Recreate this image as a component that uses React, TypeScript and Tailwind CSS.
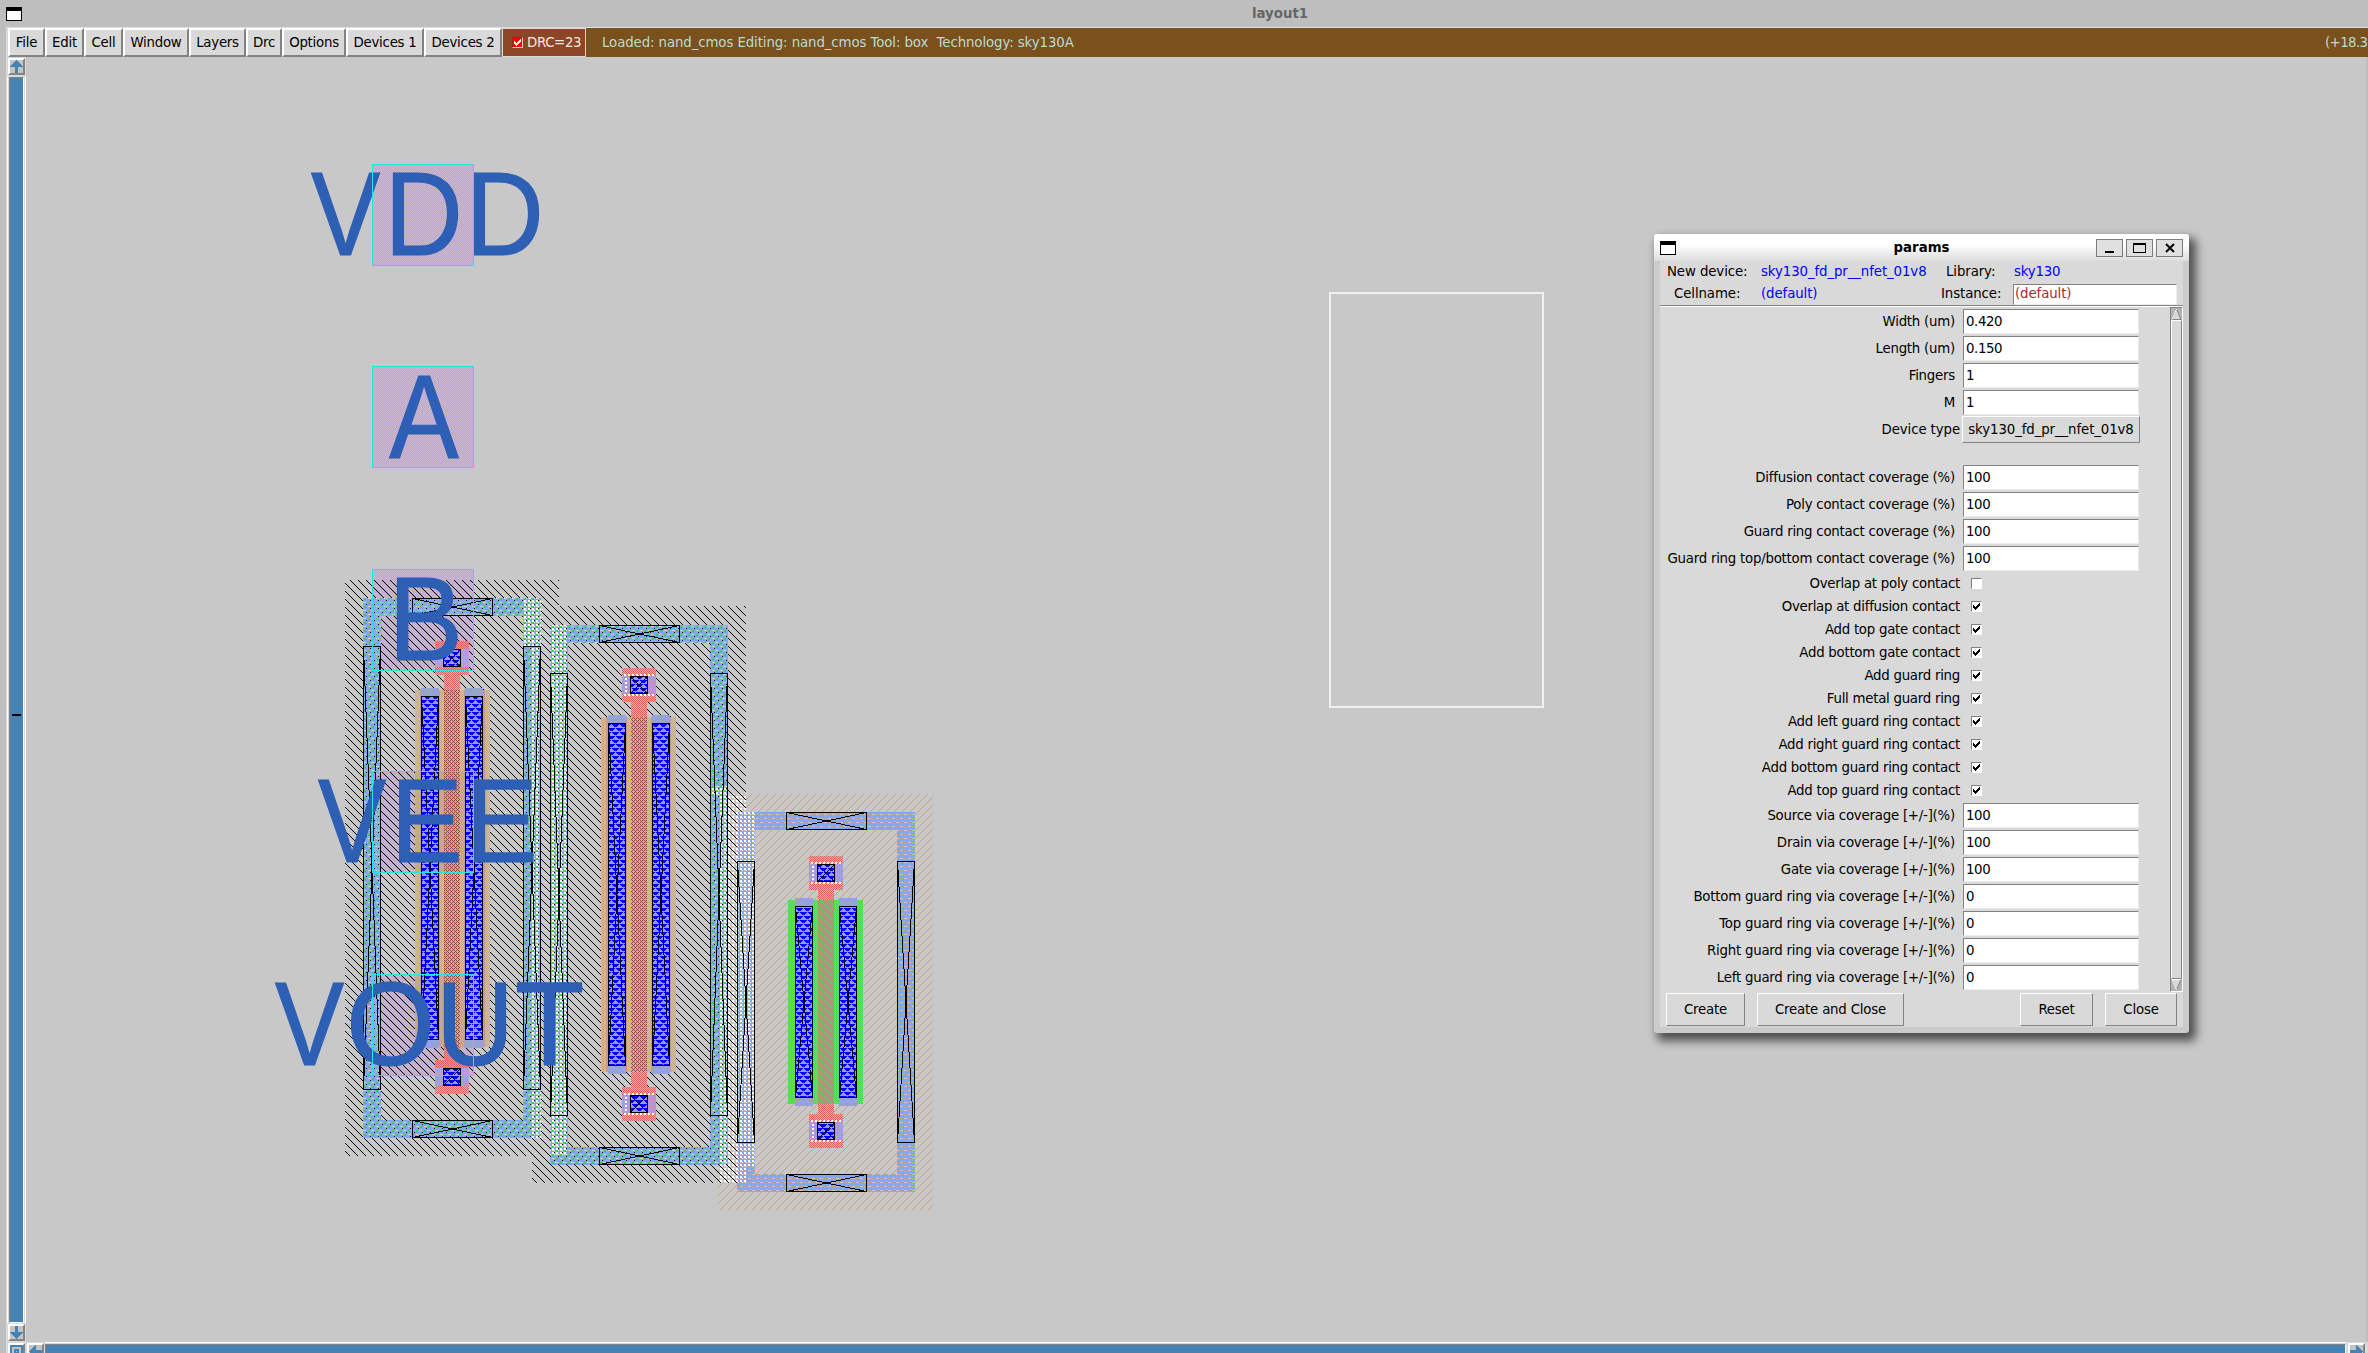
import React from "react";

const FONT = "font-['DejaVu_Sans',sans-serif] text-[13.33px] tracking-[-0.1px]";

/* ---------- Menu bar ---------- */

const MENUS: [string, string][] = [
  ["File", "w-[37px]"],
  ["Edit", "w-[39px]"],
  ["Cell", "w-[39px]"],
  ["Window", "w-[66px]"],
  ["Layers", "w-[57px]"],
  ["Drc", "w-[36px]"],
  ["Options", "w-[64px]"],
  ["Devices 1", "w-[78px]"],
  ["Devices 2", "w-[78px]"],
];

function WindowIcon() {
  return <div className="h-[14px] w-4 border border-t-4 border-black bg-white" />;
}

function Check({ color = "#000" }: { color?: string }) {
  return (
    <svg width="9" height="9" viewBox="0 0 9 9" shapeRendering="crispEdges">
      <path d="M1 3h1v1h1v1h1v-1h1v-1h1v-1h1v-1h1v3h-1v1h-1v1h-1v1h-1v1h-1v-1h-1v-1h-1z" fill={color} />
    </svg>
  );
}

function MenuBar() {
  return (
    <div className="ml-[6px] flex h-[30px] shrink-0 border-t border-[#dedede] bg-[#7a501c]">
      <div className="w-[2px] bg-[#d9d9d9]" />
      {MENUS.map(([name, w]) => (
        <div
          key={name}
          className={`${w} flex shrink-0 items-center justify-center border-2 border-t-white border-l-white border-r-[#828282] border-b-[#828282] bg-[#d9d9d9] tracking-[-0.25px] whitespace-nowrap text-black`}
        >
          {name}
        </div>
      ))}
      <div className="flex w-[84px] shrink-0 items-center border border-[#d9d9d9] bg-[#8c4526] pl-[9px] tracking-[-0.35px] whitespace-nowrap text-[#f8e8e0]">
        <span className="mr-[4px] flex h-[11px] w-[11px] items-center justify-center border border-t-[#803020] border-l-[#803020] border-r-[#e8c8c0] border-b-[#e8c8c0] bg-[#ff0000]">
          <Check color="#fff" />
        </span>
        <span>DRC=23</span>
      </div>
      <div className="ml-[16px] flex-1 self-center whitespace-pre text-[#b9dcd2]">
        Loaded: nand_cmos Editing: nand_cmos Tool: box{"  "}Technology: sky130A
      </div>
      <div className="w-[43px] self-center tracking-[-0.6px] whitespace-nowrap text-[#b9dcd2]">(+18.3</div>
    </div>
  );
}

/* ---------- Canvas scrollbars ---------- */

function ArrowButton({ rotate }: { rotate: string }) {
  return (
    <div className="h-[17px] w-[17px] shrink-0 border-2 border-t-white border-l-white border-r-[#858585] border-b-[#858585] bg-[#c3c3c3]">
      <svg width="13" height="13" viewBox="0 0 13 13" className={rotate} shapeRendering="crispEdges">
        <path d="M6.5 0L13 7H8v6H5V7H0z" fill="#4682b4" />
      </svg>
    </div>
  );
}

function LeftScrollbar() {
  return (
    <div className="flex h-full w-[20px] shrink-0 flex-col bg-[#d9d9d9] pt-px pl-[2px]">
      <ArrowButton rotate="" />
      <div className="-ml-px mt-[2px] flex h-[1246px] shrink-0 border-x border-white bg-[#d9d9d9] pr-px pl-px">
        <div className="relative h-full w-[15px] border border-b-white border-t-[#828282] border-l-[#828282] border-r-white bg-[#4682b4]">
          <div className="absolute top-[636px] left-[2px] h-[2px] w-[9px] bg-black" />
        </div>
      </div>
      <div className="mt-px shrink-0">
        <ArrowButton rotate="rotate-180" />
      </div>
      <div className="mt-[2px] h-[17px] w-[17px] shrink-0 border-2 border-t-white border-l-white border-r-[#858585] border-b-[#858585] bg-[#c3c3c3]">
        <svg width="13" height="13" viewBox="0 0 13 13" shapeRendering="crispEdges">
          <path d="M1 1h11v11H1zM5 5h3v3H5z" fill="none" stroke="#4682b4" strokeWidth="2" />
        </svg>
      </div>
    </div>
  );
}

function BottomScrollbar() {
  return (
    <div className="flex h-[11px] w-full shrink-0 overflow-hidden bg-[#d9d9d9]">
      <div className="mt-px ml-px">
        <ArrowButton rotate="-rotate-90" />
      </div>
      <div className="ml-px flex-1 border-t border-white pt-px">
        <div className="h-5 border border-t-[#828282] border-l-[#828282] border-r-white bg-[#4682b4]" />
      </div>
      <div className="mt-px mr-[3px] ml-[2px]">
        <ArrowButton rotate="rotate-90" />
      </div>
    </div>
  );
}

/* ---------- Layout drawing ---------- */

type Box = [number, number, number, number];

function Rect({ b, fill }: { b: Box; fill: string }) {
  return <rect x={b[0]} y={b[1]} width={b[2] - b[0]} height={b[3] - b[1]} fill={fill} />;
}

function Contact({ b }: { b: Box }) {
  const [x0, y0, x1, y1] = b;
  return (
    <path
      d={`M${x0 + 0.5} ${y0 + 0.5}H${x1 - 0.5}V${y1 - 0.5}H${x0 + 0.5}ZL${x1 - 0.5} ${y1 - 0.5}M${x1 - 0.5} ${y0 + 0.5}L${x0 + 0.5} ${y1 - 0.5}`}
      fill="none"
      stroke="#000"
      strokeWidth="1"
    />
  );
}

function Ring({ b, fill }: { b: Box; fill: string }) {
  const [x0, y0, x1, y1] = b;
  return (
    <path
      d={`M${x0} ${y0}H${x1}V${y1}H${x0}ZM${x0 + 18} ${y0 + 18}V${y1 - 18}H${x1 - 18}V${y0 + 18}Z`}
      fill={fill}
      fillRule="evenodd"
    />
  );
}

interface DeviceSpec {
  ring: Box;
  ringFill: string;
  sideY: [number, number];
  diff: Box;
  diffFill: string;
  innerFill: string;
  stripY: [number, number];
  padY: [number, number];
  polyFill: string;
  flagged: boolean;
}

const DEVICES: DeviceSpec[] = [
  {
    ring: [363, 598, 541, 1138],
    ringFill: "url(#ringn)",
    sideY: [646, 1090],
    diff: [415, 690, 490, 1047],
    diffFill: "url(#diffn)",
    innerFill: "url(#diffn2)",
    stripY: [696, 1040],
    padY: [641, 1060],
    polyFill: "url(#polyn)",
    flagged: false,
  },
  {
    ring: [550, 625, 728, 1165],
    ringFill: "url(#ringn)",
    sideY: [673, 1116],
    diff: [601, 717, 676, 1072],
    diffFill: "url(#diffn)",
    innerFill: "url(#diffn2)",
    stripY: [723, 1066],
    padY: [668, 1087],
    polyFill: "url(#polyn)",
    flagged: true,
  },
  {
    ring: [737, 812, 915, 1192],
    ringFill: "url(#ringp)",
    sideY: [861, 1143],
    diff: [788, 900, 863, 1104],
    diffFill: "url(#diffp)",
    innerFill: "url(#diffp)",
    stripY: [906, 1098],
    padY: [856, 1114],
    polyFill: "url(#polyp)",
    flagged: true,
  },
];

/* regions painted by the design rule checker */
const DRC: Box[] = [
  [523, 598, 541, 646],
  [532, 646, 541, 1138],
  [550, 625, 568, 1156],
  [710, 786, 728, 796],
  [719, 796, 728, 1147],
  [728, 794, 746, 1156],
  [720, 1147, 746, 1183],
  [746, 812, 755, 1166],
];

function DeviceBase({ d }: { d: DeviceSpec }) {
  const [x0] = d.ring;
  const cx = x0 + 72;
  const px = x0 + 81;
  return (
    <g>
      <Ring b={d.ring} fill={d.ringFill} />
      <Rect b={d.diff} fill={d.diffFill} />
      <Rect b={[d.diff[0] + 5, d.diff[1], px - 4, d.diff[3]]} fill={d.innerFill} />
      <Rect b={[px + 20, d.diff[1], d.diff[2] - 5, d.diff[3]]} fill={d.innerFill} />
      <Rect b={[px, d.padY[0] + 34, px + 16, d.padY[1]]} fill="url(#poly)" />
      <Rect b={[px, d.diff[1], px + 16, d.diff[3]]} fill={d.polyFill} />
      {d.padY.map((y) => (
        <g key={y}>
          <Rect b={[cx, y, cx + 34, y + 34]} fill="url(#poly)" />
          <Rect b={[cx, y + 8, cx + 34, y + 26]} fill="url(#padmetal)" />
        </g>
      ))}
    </g>
  );
}

function DeviceTop({ d }: { d: DeviceSpec }) {
  const [x0, y0, x1, y1] = d.ring;
  const cx = x0 + 72;
  const strips: Box[] = [
    [x0 + 58, d.stripY[0], x0 + 76, d.stripY[1]],
    [x0 + 102, d.stripY[0], x0 + 120, d.stripY[1]],
  ];
  const contacts: Box[] = [
    [x0 + 49, y0, x0 + 130, y0 + 18],
    [x0 + 49, y1 - 18, x0 + 130, y1],
    [x0, d.sideY[0], x0 + 18, d.sideY[1]],
    [x1 - 18, d.sideY[0], x1, d.sideY[1]],
  ];
  return (
    <g>
      {strips.map((s) => (
        <g key={s[0]}>
          <Rect b={[s[0], s[1] - 8, s[2], s[3] + 8]} fill="url(#cap)" />
          <Rect b={s} fill="url(#licon)" />
        </g>
      ))}
      {d.padY.map((y) => (
        <g key={y}>
          <Rect b={[cx + 8, y + 8, cx + 26, y + 26]} fill="url(#licon)" />
          {d.flagged && (
            <path
              d={`M${cx + 2} ${y + 7}h32M${cx + 2} ${y + 27}h32M${cx + 4} ${y + 10}v16`}
              stroke="#fff"
              strokeWidth="2"
              strokeDasharray="2 2"
              fill="none"
            />
          )}
        </g>
      ))}
      {contacts.concat(strips).map((c, i) => (
        <Contact key={i} b={c} />
      ))}
      {d.padY.map((y) => (
        <Contact key={y} b={[cx + 8, y + 8, cx + 26, y + 26]} />
      ))}
    </g>
  );
}

/* left bearing, ink width (em) of each capital */
const GLYPH: Record<string, [number, number]> = {
  V: [0.0044, 0.656],
  D: [0.082, 0.59],
  A: [0.002, 0.662],
  B: [0.082, 0.535],
  E: [0.082, 0.538],
  O: [0.048, 0.682],
  U: [0.078, 0.565],
  T: [0.023, 0.565],
};

const LABELS: { top: number; base: number; letters: [string, number, number][] }[] = [
  { top: 164, base: 255, letters: [["V", 311, 69], ["D", 393, 65], ["D", 474, 65]] },
  { top: 366, base: 458, letters: [["A", 389, 70]] },
  { top: 569, base: 660, letters: [["B", 397, 61]] },
  { top: 771, base: 862, letters: [["V", 318, 68], ["E", 399, 59], ["E", 474, 59]] },
  { top: 974, base: 1065, letters: [["V", 275, 69], ["O", 351, 79], ["U", 444, 62], ["T", 517, 65]] },
];

const SIZE = 118.5;

function Patterns() {
  const P = (id: string, w: number, h: number, body: React.ReactNode) => (
    <pattern id={id} width={w} height={h} patternUnits="userSpaceOnUse">
      {body}
    </pattern>
  );
  return (
    <defs>
      {P("nwell", 8, 8, Array.from({ length: 8 }, (_, i) => <rect key={i} x={(i + 2) % 8} y={i} width="1" height="1" fill="#000" />))}
      {P("psub", 8, 8, Array.from({ length: 8 }, (_, i) => <rect key={i} x={(17 - i) % 8} y={i} width="1" height="1" fill="#c8a078" />))}
      {P(
        "ringn",
        8,
        8,
        <>
          <rect width="8" height="8" fill="#80a8ff" />
          <path d="M0 2h2v2H0zM4 6h2v2H4z" fill="#3ccc50" />
          <path d="M3 2h3v1H3zM0 6h3v1H0z" fill="#d0d0c8" />
          <path d="M2 0h1v1H2zM6 4h1v1H6z" fill="#000" />
        </>
      )}
      {P(
        "ringp",
        8,
        8,
        <>
          <rect width="8" height="8" fill="#80a8ff" />
          <path d="M0 2h3v1H0zM4 6h3v1H4z" fill="#c8a078" />
          <path d="M4 2h3v1H4zM0 6h3v1H0z" fill="#c8c8c8" />
        </>
      )}
      {P("drc", 4, 4, <path d="M0 0h2v2H0zM2 2h1v1H2z" fill="#fff" />)}
      {P("poly", 2, 2, <><rect width="2" height="2" fill="#d4b4b4" /><path d="M0 0h1v1H0zM1 1h1v1H1z" fill="#e06060" /></>)}
      {P("polyn", 4, 4, <><rect width="4" height="4" fill="#cca8a0" /><path d="M0 0h1v1H0zM1 1h1v1H1zM2 2h1v1H2zM3 3h1v1H3zM2 0h1v1H2zM0 2h1v1H0z" fill="#a04444" /></>)}
      {P("polyp", 8, 8, <><rect width="8" height="8" fill="#b89080" />{Array.from({ length: 8 }, (_, i) => <rect key={i} x={i} y={i} width="1" height="1" fill="#50d850" />)}</>)}
      {P("diffn", 2, 2, <><rect width="2" height="2" fill="#c8c0b8" /><path d="M0 0h1v1H0zM1 1h1v1H1z" fill="#cca880" /></>)}
      {P("diffn2", 2, 2, <><rect width="2" height="2" fill="#c8a098" /><path d="M0 0h1v1H0zM1 1h1v1H1z" fill="#c09098" /></>)}
      {P("diffp", 2, 2, <><rect width="2" height="2" fill="#98c090" /><path d="M0 0h1v1H0zM1 1h1v1H1z" fill="#48d848" /></>)}
      {P("cap", 2, 2, <><rect width="2" height="2" fill="#90a0f0" /><path d="M0 0h1v1H0z" fill="#a8a0d0" /></>)}
      {P("padmetal", 2, 2, <><rect width="2" height="2" fill="#90a0f0" /><path d="M0 0h1v1H0z" fill="#c0a0d8" /></>)}
      {P("licon", 8, 8, <><rect width="8" height="8" fill="#9898f0" /><path d="M0 0h7v1H0zM1 1h5v1H1zM2 2h3v1H2zM4 4h4v1H4zM0 4h3v1H0zM5 5h3v1H5zM0 5h2v1H0zM6 6h3v1H6zM0 6h1v1H0z" fill="#0000ff" /></>)}
      {P("pin", 2, 2, <><rect width="2" height="2" fill="#d1bccc" /><path d="M1 0h1v1H1zM0 1h1v1H0z" fill="#b79fe0" /></>)}
      {P("pinOver", 2, 2, <path d="M1 0h1v1H1zM0 1h1v1H0z" fill="#b79fe8" />)}
    </defs>
  );
}

function Layout() {
  return (
    <svg className="block h-full w-full tracking-normal" viewBox="26 57 2340 1285" shapeRendering="crispEdges">
      <Patterns />
      {LABELS.map((l) => (
        <rect key={l.top} x="372" y={l.top} width="102" height="102" fill="url(#pin)" />
      ))}
      <path d="M345 580H559V606H746V1183H532V1156H345Z" fill="url(#nwell)" />
      <Rect b={[718, 794, 933, 1210]} fill="url(#psub)" />
      {DEVICES.map((d) => (
        <DeviceBase key={d.ring[0]} d={d} />
      ))}
      {LABELS.map((l) => (
        <rect key={l.top} x="372" y={l.top} width="102" height="102" fill="url(#pinOver)" />
      ))}
      {DRC.map((b, i) => (
        <Rect key={i} b={b} fill="url(#drc)" />
      ))}
      {DEVICES.map((d) => (
        <DeviceTop key={d.ring[0]} d={d} />
      ))}
      <rect x="1330" y="293" width="213" height="414" fill="none" stroke="#f0f0f0" strokeWidth="2" />
      {LABELS.map((l) => (
        <g key={l.top}>
          {l.letters.map(([ch, left, w]) => {
            const [lsb, ink] = GLYPH[ch];
            const s = (w - 1) / (ink * SIZE);
            return (
              <text
                key={left}
                transform={`translate(${left + 0.5 - lsb * SIZE * s} ${l.base - 0.5}) scale(${s} 1)`}
                fontSize={SIZE}
                fill="#2d5fb5"
                stroke="#2d5fb5"
                strokeWidth="1.2"
                className="font-['Liberation_Sans',sans-serif]"
              >
                {ch}
              </text>
            );
          })}
          <rect x="372.5" y={l.top + 0.5} width="101" height="101" fill="none" stroke="#20e8e0" />
        </g>
      ))}
    </svg>
  );
}

/* ---------- Params dialog ---------- */

const SIZES: [string, string][] = [
  ["Width (um)", "0.420"],
  ["Length (um)", "0.150"],
  ["Fingers", "1"],
  ["M", "1"],
];
const COVERAGE: [string, string][] = [
  ["Diffusion contact coverage (%)", "100"],
  ["Poly contact coverage (%)", "100"],
  ["Guard ring contact coverage (%)", "100"],
  ["Guard ring top/bottom contact coverage (%)", "100"],
];
const FLAGS: [string, boolean][] = [
  ["Overlap at poly contact", false],
  ["Overlap at diffusion contact", true],
  ["Add top gate contact", true],
  ["Add bottom gate contact", true],
  ["Add guard ring", true],
  ["Full metal guard ring", true],
  ["Add left guard ring contact", true],
  ["Add right guard ring contact", true],
  ["Add bottom guard ring contact", true],
  ["Add top guard ring contact", true],
];
const VIAS: [string, string][] = [
  ["Source via coverage [+/-](%)", "100"],
  ["Drain via coverage [+/-](%)", "100"],
  ["Gate via coverage [+/-](%)", "100"],
  ["Bottom guard ring via coverage [+/-](%)", "0"],
  ["Top guard ring via coverage [+/-](%)", "0"],
  ["Right guard ring via coverage [+/-](%)", "0"],
  ["Left guard ring via coverage [+/-](%)", "0"],
];

function EntryRow({ label, value }: { label: string; value: string }) {
  return (
    <div className="flex h-[27px] items-center">
      <span className="w-[295px] shrink-0 pt-px text-right tracking-[-0.23px] whitespace-nowrap">{label}</span>
      <span className="ml-2 flex h-[25px] w-[176px] items-center border border-t-[#828282] border-l-[#828282] border-r-[#ececec] border-b-[#ececec] bg-white pt-px pl-[2px] tracking-[-0.4px]">
        {value}
      </span>
    </div>
  );
}

function FlagRow({ label, on }: { label: string; on: boolean }) {
  return (
    <div className="flex h-[23px] items-center">
      <span className="w-[300px] shrink-0 pt-px text-right tracking-[-0.26px] whitespace-nowrap">{label}</span>
      <span className="ml-[11px] flex h-[11px] w-[11px] items-center justify-center border border-t-[#828282] border-l-[#828282] border-r-white border-b-white bg-white">
        {on && <Check />}
      </span>
    </div>
  );
}

function PushButton({ label, w }: { label: string; w: string }) {
  return (
    <div
      className={`${w} flex h-[33px] items-center justify-center border border-t-white border-l-white border-r-[#828282] border-b-[#828282] pt-px tracking-[-0.2px] whitespace-nowrap`}
    >
      {label}
    </div>
  );
}

function TitleButton({ children }: { children: React.ReactNode }) {
  return (
    <div className="flex h-[18px] w-[27px] items-center justify-center border border-[#7c7c7c] bg-[#e0e0e0]">{children}</div>
  );
}

function ParamsDialog() {
  return (
    <div className="absolute top-[234px] left-[1654px] flex h-[799px] w-[535px] flex-col rounded-[3px] bg-[#cbcbcb] text-black shadow-[5px_6px_10px_2px_rgba(0,0,0,0.6)]">
      <div className="flex h-[27px] shrink-0 items-center rounded-t-[3px] bg-linear-to-b from-white from-40% to-[#dcdcdc] pr-[6px] pl-[6px]">
        <div className="mt-px h-[14px] w-4 border border-t-4 border-black bg-white" />
        <div className="-mr-[17px] flex-1 pt-px pl-[54px] text-center font-bold tracking-normal">params</div>
        <div className="flex gap-[3px] pt-px">
          <TitleButton>
            <div className="mt-[8px] h-[2px] w-[9px] bg-black" />
          </TitleButton>
          <TitleButton>
            <div className="h-[10px] w-[13px] border border-t-2 border-black" />
          </TitleButton>
          <TitleButton>
            <svg width="10" height="10" viewBox="0 0 10 10">
              <path d="M1 1l8 8M9 1l-8 8" stroke="#000" strokeWidth="2" />
            </svg>
          </TitleButton>
        </div>
      </div>
      <div className="mx-[6px] flex h-[766px] flex-col bg-[#d9d9d9]">
        <div className="flex h-[22px] items-center pb-px whitespace-nowrap">
          <span className="w-[94px] pl-[7px]">New device:</span>
          <span className="ml-[7px] w-[166px] text-[#0000ff]">sky130_fd_pr__nfet_01v8</span>
          <span className="ml-[19px] w-[68px]">Library:</span>
          <span className="tracking-[-0.2px] text-[#0000ff]">sky130</span>
        </div>
        <div className="flex h-[22px] items-center whitespace-nowrap">
          <span className="w-[94px] pb-px pl-[14px]">Cellname:</span>
          <span className="ml-[7px] w-[166px] pb-px text-[#0000ff]">(default)</span>
          <span className="ml-[14px] w-[72px] pb-px">Instance:</span>
          <span className="flex h-[21px] w-[164px] items-center border border-t-[#828282] border-l-[#828282] border-r-[#ececec] border-b-[#ececec] bg-white pl-px text-[#a52a2a]">
            (default)
          </span>
        </div>
        <div className="h-[2px] border-t border-b border-t-[#828282] border-b-white" />
        <div className="flex h-[685px]">
          <div className="w-[510px] pt-px">
            {SIZES.map(([l, v]) => (
              <EntryRow key={l} label={l} value={v} />
            ))}
            <div className="flex h-[27px] items-center">
              <span className="w-[300px] pt-px text-right">Device type</span>
              <span className="ml-[2px] flex h-[27px] w-[178px] items-center justify-center border border-t-white border-l-white border-r-[#828282] border-b-[#828282] pt-px">
                sky130_fd_pr__nfet_01v8
              </span>
            </div>
            <div className="h-[21px]" />
            {COVERAGE.map(([l, v]) => (
              <EntryRow key={l} label={l} value={v} />
            ))}
            {FLAGS.map(([l, on]) => (
              <FlagRow key={l} label={l} on={on} />
            ))}
            {VIAS.map(([l, v]) => (
              <EntryRow key={l} label={l} value={v} />
            ))}
          </div>
          <div className="flex w-[13px] flex-col border border-t-[#828282] border-l-[#828282] border-r-white border-b-white bg-[#b3b3b3]">
            <svg width="11" height="12" viewBox="0 0 10 12">
              <path d="M5 1L9.5 11.5H.5Z" fill="#d9d9d9" stroke="#828282" strokeWidth="1" />
              <path d="M5 1L.5 11.5" stroke="#fff" strokeWidth="1" />
            </svg>
            <div className="flex-1 border border-t-white border-l-white border-r-[#828282] border-b-[#828282] bg-[#d9d9d9]" />
            <svg width="11" height="12" viewBox="0 0 10 12">
              <path d="M5 11L9.5 .5H.5Z" fill="#d9d9d9" stroke="#828282" strokeWidth="1" />
              <path d="M9.5 .5H.5L5 11" fill="none" stroke="#fff" strokeWidth="1" />
            </svg>
          </div>
        </div>
        <div className="mt-px flex pl-[6px]">
          <PushButton label="Create" w="w-[79px]" />
          <div className="w-3" />
          <PushButton label="Create and Close" w="w-[147px]" />
          <div className="w-[116px]" />
          <PushButton label="Reset" w="w-[73px]" />
          <div className="w-3" />
          <PushButton label="Close" w="w-[72px]" />
        </div>
      </div>
    </div>
  );
}

export default function App() {
  return (
    <div className={`${FONT} relative flex h-[1353px] w-[2368px] flex-col overflow-hidden bg-[#bebebe] leading-none`}>
      <div className="flex h-[27px] shrink-0 items-center pl-[6px]">
        <WindowIcon />
        <div className="flex-1 pt-px pl-[170px] text-center font-bold tracking-normal text-[#666]">layout1</div>
      </div>
      <MenuBar />
      <div className="ml-[6px] flex h-[1296px] shrink-0">
        <LeftScrollbar />
        <div className="flex w-[2342px] flex-col">
          <div className="mr-[2px] h-[1285px] bg-[#c8c8c8]">
            <Layout />
          </div>
          <BottomScrollbar />
        </div>
      </div>
      <ParamsDialog />
    </div>
  );
}
